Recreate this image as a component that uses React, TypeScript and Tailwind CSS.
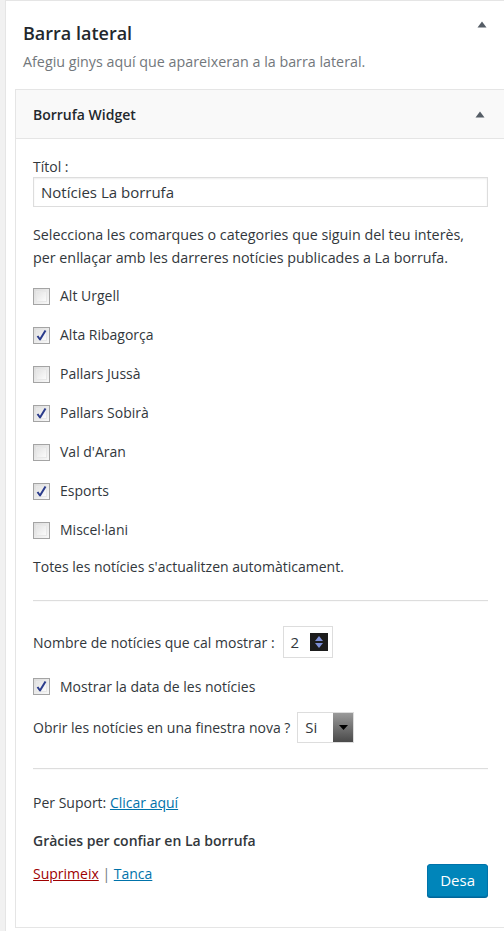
import React from "react";

const font = { fontFamily: '"Open Sans", "Noto Sans", sans-serif' };

const regions = [
  { name: "Alt Urgell", checked: false },
  { name: "Alta Ribagorça", checked: true },
  { name: "Pallars Jussà", checked: false },
  { name: "Pallars Sobirà", checked: true },
  { name: "Val d'Aran", checked: false },
  { name: "Esports", checked: true },
  { name: "Miscel·lani", checked: false },
];

const Caret = () => (
  <svg width="10" height="7" viewBox="0 0 10 7" className="block">
    <path d="M5 0.5 L9.5 6.5 L0.5 6.5 Z" fill="#555d66" />
  </svg>
);

const Checkbox = ({ checked }: { checked: boolean }) => (
  <span className="relative inline-block h-[17px] w-[17px] shrink-0 border border-[#a4a4a4] bg-[linear-gradient(135deg,#dcdcdc,#f8f8f8)] p-[2px]">
    <span className="block h-full w-full border border-[#e8e8e8] bg-[linear-gradient(135deg,#e4e4e4,#fbfbfb)]" />
    {checked && (
      <svg
        width="13"
        height="13"
        viewBox="0 0 13 13"
        className="absolute left-[1px] top-[1px]"
      >
        <path
          d="M2.5 7 L5 10.5 L10.5 1.5"
          fill="none"
          stroke="#2b3c8c"
          strokeWidth="2"
          strokeLinejoin="round"
        />
      </svg>
    )}
  </span>
);

const Divider = () => (
  <div className="border-t border-b border-t-[#dddddd] border-b-[#fafafa]" />
);

export default function App() {
  return (
    <div
      className="min-h-[931px] bg-[#f1f1f1] pl-[5px] text-[14px] text-[#32373c]"
      style={font}
    >
      <div className="min-h-[931px] border-l border-t border-[#e5e5e5] bg-white pl-[9px]">
        {/* Sidebar heading */}
        <div className="pl-[8px] pr-[16px] pt-[20px]">
          <div className="flex items-center justify-between">
            <h2 className="text-[18px] font-semibold leading-[24px] text-[#23282d]">
              Barra lateral
            </h2>
            <span className="-mt-[18px] mr-[1px]">
              <Caret />
            </span>
          </div>
          <p className="mt-[7px] text-[14.3px] leading-[20px] text-[#72777c]">
            Afegiu ginys aquí que apareixeran a la barra lateral.
          </p>
        </div>

        {/* Widget */}
        <div className="mt-[17px] border border-r-0 border-[#e5e5e5]">
          <div className="flex h-[49px] items-center justify-between border-b border-[#e5e5e5] bg-[#f9f9f9] pl-[17px] pr-[19px]">
            <h3 className="text-[14px] font-semibold text-[#23282d]">
              Borrufa Widget
            </h3>
            <Caret />
          </div>

          <div className="pl-[17px] pr-[16px] pb-[30px]">
            <label className="mt-[18px] block leading-[20px]">Títol :</label>
            <input
              readOnly
              value="Notícies La borrufa"
              className="block h-[30px] w-full border border-[#dddddd] px-[7px] text-[15px] text-[#32373c] shadow-[inset_0_1px_2px_rgba(0,0,0,0.07)] outline-none"
              style={font}
            />

            <p className="mt-[16px] text-[14.3px] leading-[23px]">
              Selecciona les comarques o categories que siguin del teu interès,
              per enllaçar amb les darreres notícies publicades a La borrufa.
            </p>

            <div className="mt-[17px] flex flex-col gap-[19px]">
              {regions.map((r) => (
                <div key={r.name} className="flex h-[20px] items-center gap-[10px]">
                  <Checkbox checked={r.checked} />
                  <span className="leading-[20px]">{r.name}</span>
                </div>
              ))}
            </div>

            <p className="mt-[17px] leading-[20px]">
              Totes les notícies s'actualitzen automàticament.
            </p>

            <div className="mt-[23px]">
              <Divider />
            </div>

            <div className="mt-[24px] flex items-center gap-[8px]">
              <span>Nombre de notícies que cal mostrar :</span>
              <div className="flex h-[32px] w-[50px] items-center border border-[#dddddd] pl-[7px] pr-[4px]">
                <span className="flex-1 text-[15px]">2</span>
                <span className="flex h-[18px] w-[18px] flex-col items-center justify-center gap-[2px] bg-[#1c1c1c]">
                  <svg width="8" height="5" viewBox="0 0 8 5">
                    <path d="M4 0 L8 5 L0 5 Z" fill="#7d8fd6" />
                  </svg>
                  <svg width="8" height="5" viewBox="0 0 8 5">
                    <path d="M0 0 L8 0 L4 5 Z" fill="#7d8fd6" />
                  </svg>
                </span>
              </div>
            </div>

            <div className="mt-[18px] flex h-[20px] items-center gap-[10px]">
              <Checkbox checked />
              <span>Mostrar la data de les notícies</span>
            </div>

            <div className="mt-[16px] flex items-center gap-[7px]">
              <span>Obrir les notícies en una finestra nova ?</span>
              <div className="flex h-[31px] w-[57px] items-center border border-[#dddddd] pl-[7px]">
                <span className="flex-1 text-[15px]">Si</span>
                <span className="flex h-[29px] w-[20px] items-center justify-center bg-[linear-gradient(#9a9a9a,#4a4a4a)]">
                  <svg width="9" height="5" viewBox="0 0 9 5">
                    <path d="M0 0 L9 0 L4.5 5 Z" fill="#000000" />
                  </svg>
                </span>
              </div>
            </div>

            <div className="mt-[25px]">
              <Divider />
            </div>

            <p className="mt-[23px] leading-[20px]">
              Per Suport:{" "}
              <a className="text-[#0073aa] underline" href="#">
                Clicar aquí
              </a>
            </p>

            <p className="mt-[18px] font-semibold leading-[20px]">
              Gràcies per confiar en La borrufa
            </p>

            <div className="mt-[13px] flex items-start justify-between">
              <div className="leading-[20px]">
                <a className="text-[#a00000] underline" href="#">
                  Suprimeix
                </a>{" "}
                <span className="text-[#72777c]">|</span>{" "}
                <a className="text-[#0073aa] underline" href="#">
                  Tanca
                </a>
              </div>
              <button className="h-[33px] rounded-[3px] border border-[#0073aa] bg-[#0085ba] px-[12px] text-[15px] text-white shadow-[0_1px_0_#006799]">
                Desa
              </button>
            </div>
          </div>
        </div>
      </div>
    </div>
  );
}
